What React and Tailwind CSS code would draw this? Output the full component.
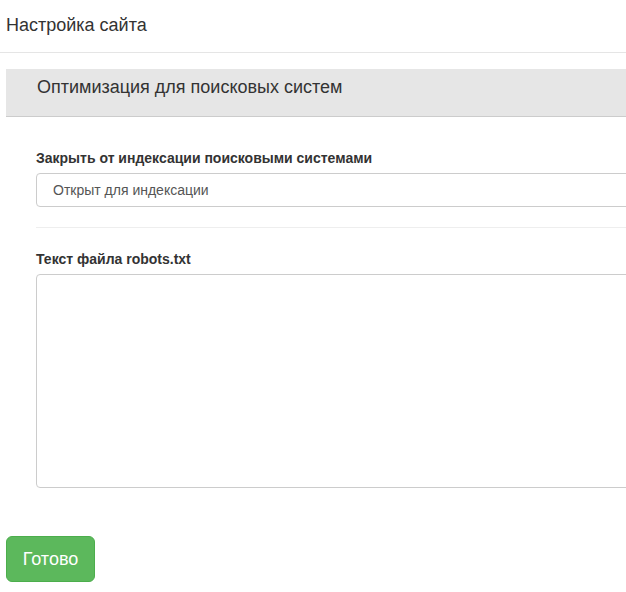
import React from "react";

function App() {
    return (
        <div className="w-[626px] h-[592px] overflow-hidden bg-white text-[#333] font-['Liberation_Sans',Arial,sans-serif]">
            <div className="w-[760px]">
                <div className="h-[53px] border-b border-[#e5e5e5] pl-[6px] pt-[13px]">
                    <h1 className="text-[18px] leading-[24px]">Настройка сайта</h1>
                </div>

                <div className="pl-[6px] pt-[16px]">
                    <div className="h-[48px] bg-[#e6e6e6] border-b border-[#cccccc] pl-[31px] pt-[6px]">
                        <h2 className="text-[18px] leading-[24px] text-[#333]">Оптимизация для поисковых систем</h2>
                    </div>

                    <div className="pl-[30px] pt-[32px]">
                        <label className="block text-[14px] font-bold leading-[18px] text-[#333] mb-[6px]">
                            Закрыть от индексации поисковыми системами
                        </label>
                        <div className="h-[34px] border border-[#cccccc] rounded-[4px] pl-[16px] flex items-center text-[14px] text-[#555]">
                            Открыт для индексации
                        </div>

                        <hr className="mt-[20px] mb-[22px] border-t border-[#eeeeee]" />

                        <label className="block text-[14px] font-bold leading-[18px] text-[#333] mb-[6px]">
                            Текст файла robots.txt
                        </label>
                        <textarea className="block w-full h-[214px] border border-[#cccccc] rounded-[4px] resize-none outline-none" />
                    </div>
                </div>

                <div className="pl-[6px] pt-[48px]">
                    <button className="w-[89px] h-[46px] bg-[#5cb85c] border border-[#4cae4c] rounded-[6px] text-white text-[18px] leading-[24px]">
                        Готово
                    </button>
                </div>
            </div>
        </div>
    );
}

export default App;
